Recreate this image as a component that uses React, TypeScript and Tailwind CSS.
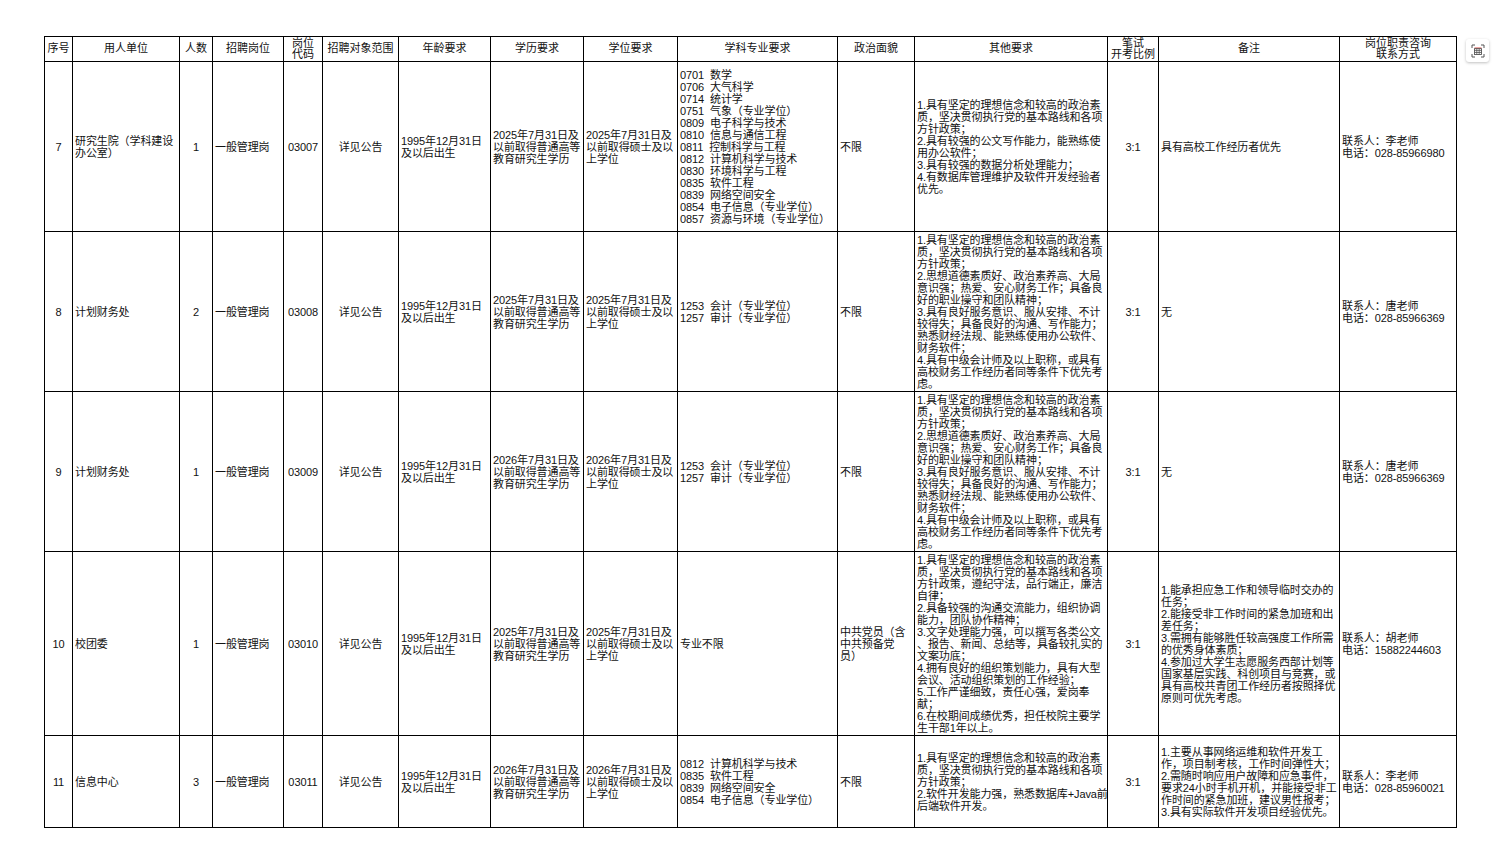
import React from "react";

type Row = {
  cells: (string[] | string)[];
  h: string;
};

const cols = [28, 107, 33, 71, 39, 76, 92, 93, 94, 160, 77, 193, 51, 181, 117];
const centered = [0, 2, 4, 5, 12];

const headers = [
  ["序号"],
  ["用人单位"],
  ["人数"],
  ["招聘岗位"],
  ["岗位", "代码"],
  ["招聘对象范围"],
  ["年龄要求"],
  ["学历要求"],
  ["学位要求"],
  ["学科专业要求"],
  ["政治面貌"],
  ["其他要求"],
  ["笔试", "开考比例"],
  ["备注"],
  ["岗位职责咨询", "联系方式"],
];

const finance = [
  "1.具有坚定的理想信念和较高的政治素",
  "质，坚决贯彻执行党的基本路线和各项",
  "方针政策；",
  "2.思想道德素质好、政治素养高、大局",
  "意识强；热爱、安心财务工作；具备良",
  "好的职业操守和团队精神；",
  "3.具有良好服务意识、服从安排、不计",
  "较得失；具备良好的沟通、写作能力；",
  "熟悉财经法规、能熟练使用办公软件、",
  "财务软件；",
  "4.具有中级会计师及以上职称，或具有",
  "高校财务工作经历者同等条件下优先考",
  "虑。",
];

const age = ["1995年12月31日", "及以后出生"];
const edu25 = ["2025年7月31日及", "以前取得普通高等", "教育研究生学历"];
const edu26 = ["2026年7月31日及", "以前取得普通高等", "教育研究生学历"];
const deg25 = ["2025年7月31日及", "以前取得硕士及以", "上学位"];
const deg26 = ["2026年7月31日及", "以前取得硕士及以", "上学位"];

const rows: Row[] = [
  {
    h: "h-[170px]",
    cells: [
      "7",
      ["研究生院（学科建设", "办公室）"],
      "1",
      "一般管理岗",
      "03007",
      "详见公告",
      age,
      edu25,
      deg25,
      [
        "0701  数学",
        "0706  大气科学",
        "0714  统计学",
        "0751  气象（专业学位）",
        "0809  电子科学与技术",
        "0810  信息与通信工程",
        "0811  控制科学与工程",
        "0812  计算机科学与技术",
        "0830  环境科学与工程",
        "0835  软件工程",
        "0839  网络空间安全",
        "0854  电子信息（专业学位）",
        "0857  资源与环境（专业学位）",
      ],
      "不限",
      [
        "1.具有坚定的理想信念和较高的政治素",
        "质，坚决贯彻执行党的基本路线和各项",
        "方针政策；",
        "2.具有较强的公文写作能力，能熟练使",
        "用办公软件；",
        "3.具有较强的数据分析处理能力；",
        "4.有数据库管理维护及软件开发经验者",
        "优先。",
      ],
      "3:1",
      "具有高校工作经历者优先",
      ["联系人：李老师", "电话：028-85966980"],
    ],
  },
  {
    h: "h-[160px]",
    cells: [
      "8",
      "计划财务处",
      "2",
      "一般管理岗",
      "03008",
      "详见公告",
      age,
      edu25,
      deg25,
      ["1253  会计（专业学位）", "1257  审计（专业学位）"],
      "不限",
      finance,
      "3:1",
      "无",
      ["联系人：唐老师", "电话：028-85966369"],
    ],
  },
  {
    h: "h-[160px]",
    cells: [
      "9",
      "计划财务处",
      "1",
      "一般管理岗",
      "03009",
      "详见公告",
      age,
      edu26,
      deg26,
      ["1253  会计（专业学位）", "1257  审计（专业学位）"],
      "不限",
      finance,
      "3:1",
      "无",
      ["联系人：唐老师", "电话：028-85966369"],
    ],
  },
  {
    h: "h-[184px]",
    cells: [
      "10",
      "校团委",
      "1",
      "一般管理岗",
      "03010",
      "详见公告",
      age,
      edu25,
      deg25,
      "专业不限",
      ["中共党员（含", "中共预备党", "员）"],
      [
        "1.具有坚定的理想信念和较高的政治素",
        "质，坚决贯彻执行党的基本路线和各项",
        "方针政策，遵纪守法，品行端正，廉洁",
        "自律；",
        "2.具备较强的沟通交流能力，组织协调",
        "能力，团队协作精神；",
        "3.文字处理能力强，可以撰写各类公文",
        "、报告、新闻、总结等，具备较扎实的",
        "文案功底；",
        "4.拥有良好的组织策划能力，具有大型",
        "会议、活动组织策划的工作经验；",
        "5.工作严谨细致，责任心强，爱岗奉",
        "献；",
        "6.在校期间成绩优秀，担任校院主要学",
        "生干部1年以上。",
      ],
      "3:1",
      [
        "1.能承担应急工作和领导临时交办的",
        "任务；",
        "2.能接受非工作时间的紧急加班和出",
        "差任务；",
        "3.需拥有能够胜任较高强度工作所需",
        "的优秀身体素质；",
        "4.参加过大学生志愿服务西部计划等",
        "国家基层实践、科创项目与竞赛，或",
        "具有高校共青团工作经历者按照择优",
        "原则可优先考虑。",
      ],
      ["联系人：胡老师", "电话：15882244603"],
    ],
  },
  {
    h: "h-[92px]",
    cells: [
      "11",
      "信息中心",
      "3",
      "一般管理岗",
      "03011",
      "详见公告",
      age,
      edu26,
      deg26,
      [
        "0812  计算机科学与技术",
        "0835  软件工程",
        "0839  网络空间安全",
        "0854  电子信息（专业学位）",
      ],
      "不限",
      [
        "1.具有坚定的理想信念和较高的政治素",
        "质，坚决贯彻执行党的基本路线和各项",
        "方针政策；",
        "2.软件开发能力强，熟悉数据库+Java前",
        "后端软件开发。",
      ],
      "3:1",
      [
        "1.主要从事网络运维和软件开发工",
        "作，项目制考核，工作时间弹性大；",
        "2.需随时响应用户故障和应急事件，",
        "要求24小时手机开机，并能接受非工",
        "作时间的紧急加班，建议男性报考；",
        "3.具有实际软件开发项目经验优先。",
      ],
      ["联系人：李老师", "电话：028-85960021"],
    ],
  },
];

function Lines({ value }: { value: string[] | string }) {
  const list = Array.isArray(value) ? value : [value];
  return (
    <>
      {list.map((l, i) => (
        <div key={i} className="whitespace-pre">
          {l}
        </div>
      ))}
    </>
  );
}

function TableIcon() {
  return (
    <svg width="14" height="14" viewBox="0 0 14 14" fill="none">
      <path d="M1 4V1h3M10 1h3v3M13 10v3h-3M4 13H1v-3" stroke="#555" strokeWidth="1" />
      <rect x="3.5" y="3.5" width="7" height="1.2" fill="#d9534f" />
      <rect x="3.5" y="4.7" width="7" height="5.8" stroke="#555" strokeWidth="0.9" />
      <path d="M3.5 6.6h7M3.5 8.5h7M5.8 4.7v5.8M8.2 4.7v5.8" stroke="#555" strokeWidth="0.8" />
    </svg>
  );
}

export default function App() {
  return (
    <div className="relative min-h-[860px] w-[1492px] bg-white text-[#111] font-['Liberation_Sans','Noto_Sans_CJK_SC',sans-serif] text-[11px] leading-[12px]">
      <div className="pl-[44px] pt-[36px]">
        <table className="table-fixed border-collapse w-[1412px]">
          <colgroup>
            {cols.map((w, i) => (
              <col key={i} style={{ width: w }} />
            ))}
          </colgroup>
          <thead>
            <tr className="h-[25px]">
              {headers.map((h, i) => (
                <th
                  key={i}
                  className="border border-black p-0 text-center align-middle font-normal leading-[11.5px]"
                >
                  <Lines value={h} />
                </th>
              ))}
            </tr>
          </thead>
          <tbody>
            {rows.map((r, ri) => (
              <tr key={ri} className={r.h}>
                {r.cells.map((c, ci) => (
                  <td
                    key={ci}
                    className={
                      "border border-black px-[2px] align-middle tracking-[-0.1px] " +
                      (centered.includes(ci) ? "text-center" : "text-left")
                    }
                  >
                    <Lines value={c} />
                  </td>
                ))}
              </tr>
            ))}
          </tbody>
        </table>
      </div>
      <div className="absolute left-[1466px] top-[39px] flex h-[23px] w-[23px] items-center justify-center rounded-[3px] bg-white shadow-[0_1px_3px_rgba(0,0,0,0.25)]">
        <TableIcon />
      </div>
    </div>
  );
}
